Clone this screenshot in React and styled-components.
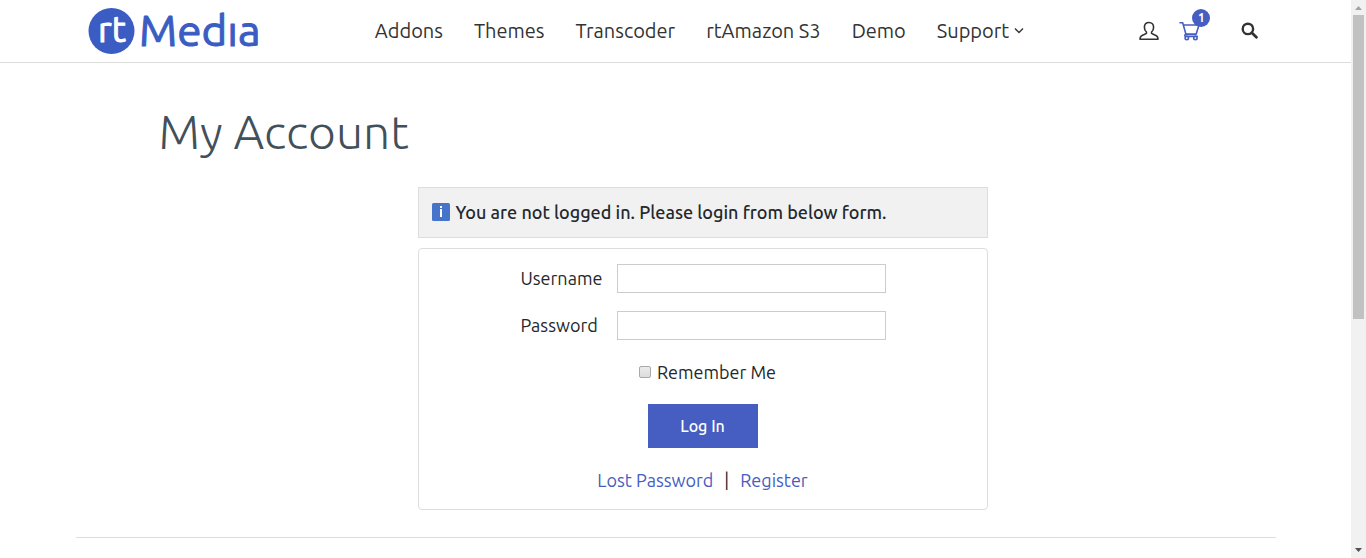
import React from "react";
import styled, { createGlobalStyle, css } from "styled-components";

const ink = "#23282d";
const brand = "#465dc1";
const line = "#dddddd";

const GlobalStyle = createGlobalStyle`
  *, *::before, *::after { box-sizing: border-box; }
  body {
    margin: 0;
    background: #ffffff;
    color: ${ink};
    font-family: Ubuntu, "Noto Sans", "Open Sans", sans-serif;
    font-size: 18px;
    line-height: 24px;
  }
  a { text-decoration: none; }
`;

const Shell = styled.div`
  display: grid;
  grid-template-columns: minmax(0, 1fr) 15px;
  min-height: 100vh;
`;

const Page = styled.div`
  display: flex;
  flex-direction: column;
`;

const Header = styled.header`
  border-bottom: 1px solid ${line};
`;

const HeaderInner = styled.div`
  display: flex;
  align-items: center;
  justify-content: space-between;
  max-width: 1200px;
  height: 62px;
  margin: 0 auto;
  padding: 0 17px 0 12px;
`;

const LogoLink = styled.a`
  display: flex;
`;

const Nav = styled.nav`
  display: flex;
  align-items: center;
  gap: 31px;
`;

const NavLink = styled.a`
  display: flex;
  align-items: center;
  gap: 5px;
  color: #333333;
  font-size: 20px;
  line-height: 28px;
`;

const Tools = styled.div`
  display: flex;
  align-items: center;
  gap: 20px;
`;

const ToolLink = styled.a`
  position: relative;
  display: flex;
  color: ${(p) => (p.$accent ? brand : "#333333")};
`;

const SearchButton = styled.button`
  display: flex;
  margin-left: 21px;
  padding: 0 0 2px;
  border: 0;
  background: none;
  color: #333333;
`;

const Badge = styled.span`
  position: absolute;
  top: -12px;
  left: 13px;
  width: 18px;
  height: 18px;
  border-radius: 50%;
  background: ${brand};
  color: #ffffff;
  font-size: 12px;
  font-weight: 700;
  line-height: 18px;
  text-align: center;
`;

const Main = styled.main`
  width: 100%;
  max-width: 1200px;
  margin: 0 auto;
  padding: 34px 29px 27px 83px;
  border-bottom: 1px solid ${line};
`;

const Title = styled.h1`
  margin: 0 0 22px;
  color: #42505a;
  font-size: 48px;
  font-weight: 300;
  line-height: 68px;
`;

const Column = styled.div`
  display: flex;
  flex-direction: column;
  gap: 10px;
  max-width: 570px;
  margin: 0 auto;
`;

const Notice = styled.p`
  display: flex;
  align-items: center;
  gap: 6px;
  margin: 0;
  padding: 12px 13px 14px;
  height: 51px;
  border: 1px solid ${line};
  background: #f1f1f1;
  font-weight: 500;
`;

const Form = styled.form`
  display: flex;
  flex-direction: column;
  align-items: center;
  padding: 15px 15px 17px;
  border: 1px solid ${line};
  border-radius: 4px;
`;

const Field = styled.div`
  display: grid;
  grid-template-columns: 97px 269px;
  align-items: center;
  margin-bottom: 18px;
`;

const FieldLabel = styled.label`
  padding: 0 0 2px 1px;
`;

const box = css`
  border: 1px solid #cccccc;
  background: #ffffff;
`;

const TextInput = styled.input`
  ${box}
  width: 100%;
  height: 29px;
  padding: 0 6px;
  font: inherit;
`;

const Remember = styled.label`
  display: flex;
  align-items: center;
  gap: 6px;
  margin-bottom: 20px;
  padding: 2px 0 0 10px;
`;

const Checkbox = styled.input`
  appearance: none;
  width: 12px;
  height: 12px;
  margin: 0;
  border: 1px solid #a9a9a9;
  border-radius: 2px;
  background: linear-gradient(#ececec, #dcdcdc);
`;

const Submit = styled.button`
  width: 110px;
  height: 44px;
  margin-bottom: 20px;
  border: 0;
  background: ${brand};
  color: #ffffff;
  font: 500 16px/24px Ubuntu, "Noto Sans", "Open Sans", sans-serif;
`;

const Links = styled.div`
  display: flex;
  gap: 11px;
`;

const TextLink = styled.a`
  color: ${brand};
`;

const ScrollTrack = styled.div`
  position: sticky;
  top: 0;
  display: flex;
  flex-direction: column;
  align-items: center;
  height: 100vh;
  background: #f1f1f1;
`;

const ScrollArrow = styled.svg`
  flex: none;
  width: 15px;
  height: 15px;
  fill: ${(p) => (p.$dim ? "#a3a3a3" : "#505050")};
`;

const ScrollLane = styled.div`
  flex: 1;
  width: 11px;
`;

const ScrollThumb = styled.div`
  height: 57.6%;
  background: #c1c1c1;
`;

const Logo = () => (
  <svg width="172" height="62" viewBox="0 0 172 62" role="img" aria-label="rtMedia">
    <circle cx="23.500" cy="31" r="23" fill="#3b5cc2" />
    <g strokeLinejoin="round" strokeLinecap="round" fontFamily="Ubuntu, sans-serif">
      <text x="10" y="42" fontSize="36" fontWeight="400" fill="#fff" stroke="#fff" strokeWidth="1">rt</text>
      <text x="51" y="46" fontSize="44" fontWeight="400" fill="#3b5cc2" stroke="#3b5cc2" strokeWidth="1">Medıa</text>
    </g>
  </svg>
);

const UserIcon = () => (
  <svg width="20" height="20" viewBox="0 0 20 20" fill="none" stroke="currentColor" strokeWidth="1.6" strokeLinejoin="round" aria-hidden="true">
    <path d="M10 1.500c-2.800 0-4.600 2-4.600 4.800 0 2 .8 3.900 2.100 4.900.3.900-.2 1.500-1.200 1.900l-3.200 1.300C1.600 15 1 16.300 1 18.300h18c0-2-.6-3.300-2.100-3.900l-3.200-1.300c-1-.4-1.500-1-1.200-1.900 1.300-1 2.100-2.900 2.100-4.900C14.600 3.500 12.800 1.500 10 1.500z" />
  </svg>
);

const CartIcon = () => (
  <svg width="21" height="20" viewBox="0 0 21 20" fill="none" stroke="currentColor" strokeWidth="1.600" strokeLinejoin="round" strokeLinecap="round" aria-hidden="true">
    <path d="M1 1.700h2.700l3.200 11.400h10.300L20 4H4.400" />
    <path d="M6.900 13.100c-1.200.5-1.400 1.600-.6 2.300h11.900" />
    <circle cx="7.800" cy="17" r="1.700" />
    <circle cx="16.400" cy="17" r="1.700" />
  </svg>
);

const SearchIcon = () => (
  <svg width="17" height="17" viewBox="0 0 17 17" fill="none" stroke="currentColor" aria-hidden="true">
    <circle cx="6.900" cy="6.900" r="5.200" strokeWidth="2.400" />
    <path d="M10.800 10.800L15.400 15.200" strokeWidth="2.800" strokeLinecap="round" />
  </svg>
);

const ChevronIcon = () => (
  <svg width="10" height="8" viewBox="0 0 10 8" fill="none" stroke="currentColor" strokeWidth="1.400" aria-hidden="true">
    <path d="M1 1.500l4 4 4-4" />
  </svg>
);

const InfoIcon = () => (
  <svg width="18" height="18" viewBox="0 0 18 18" aria-hidden="true">
    <rect width="18" height="18" rx="1.500" fill="#4674ca" />
    <rect x="8" y="3" width="2" height="2" fill="#fff" />
    <rect x="8" y="6" width="2" height="8" fill="#fff" />
  </svg>
);

const items = ["Addons", "Themes", "Transcoder", "rtAmazon S3", "Demo"];

export default function App() {
  return (
    <>
      <GlobalStyle />
      <Shell>
        <Page>
          <Header>
            <HeaderInner>
              <LogoLink href="#home"><Logo /></LogoLink>
              <Nav>
                {items.map((item) => (
                  <NavLink key={item} href="#nav">{item}</NavLink>
                ))}
                <NavLink href="#support">Support<ChevronIcon /></NavLink>
              </Nav>
              <Tools>
                <ToolLink href="#account" aria-label="Account"><UserIcon /></ToolLink>
                <ToolLink href="#cart" aria-label="Cart" $accent>
                  <CartIcon />
                  <Badge>1</Badge>
                </ToolLink>
                <SearchButton type="button" aria-label="Search"><SearchIcon /></SearchButton>
              </Tools>
            </HeaderInner>
          </Header>
          <Main>
            <Title>My Account</Title>
            <Column>
              <Notice><InfoIcon />You are not logged in. Please login from below form.</Notice>
              <Form onSubmit={(e) => e.preventDefault()}>
                <Field>
                  <FieldLabel htmlFor="username">Username</FieldLabel>
                  <TextInput id="username" type="text" />
                </Field>
                <Field>
                  <FieldLabel htmlFor="password">Password</FieldLabel>
                  <TextInput id="password" type="password" />
                </Field>
                <Remember>
                  <Checkbox type="checkbox" />
                  Remember Me
                </Remember>
                <Submit type="submit">Log In</Submit>
                <Links>
                  <TextLink href="#lost">Lost Password</TextLink>
                  <span>|</span>
                  <TextLink href="#register">Register</TextLink>
                </Links>
              </Form>
            </Column>
          </Main>
        </Page>
        <ScrollTrack aria-hidden="true">
          <ScrollArrow viewBox="0 0 15 15" $dim><path d="M4 10h7L7.500 6z" /></ScrollArrow>
          <ScrollLane><ScrollThumb /></ScrollLane>
          <ScrollArrow viewBox="0 0 15 15"><path d="M4 5h7L7.500 9z" /></ScrollArrow>
        </ScrollTrack>
      </Shell>
    </>
  );
}
